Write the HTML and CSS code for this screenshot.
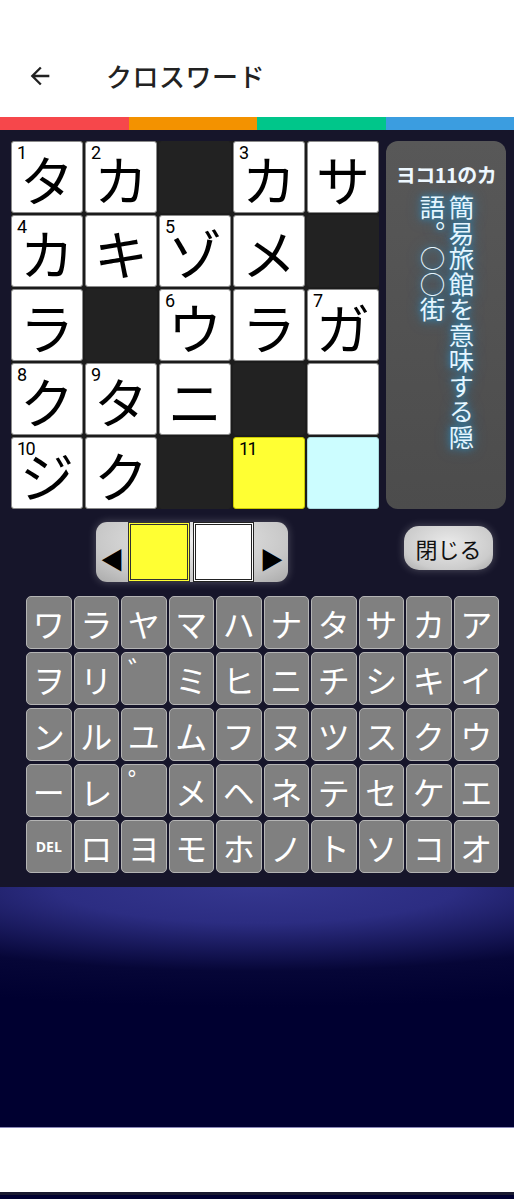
FILE: index.html
```html
<!DOCTYPE html>
<html lang="ja">
<head>
<meta charset="utf-8">
<title>クロスワード</title>
<link rel="stylesheet" href="styles.css">
</head>
<body>
<div class="app">
  <header class="topbar">
    <svg class="back" width="28" height="28" viewBox="0 0 24 24"><path d="M20 11H7.83l5.59-5.59L12 4l-8 8 8 8 1.41-1.41L7.83 13H20v-2z" fill="#222"/></svg>
    <h1 class="title">クロスワード</h1>
  </header>
  <div class="colorbar"><span class="c1"></span><span class="c2"></span><span class="c3"></span><span class="c4"></span></div>
  <main class="game">
    <div class="board-row">
      <div class="grid">
        <div class="cell"><i>1</i>タ</div>
        <div class="cell"><i>2</i>カ</div>
        <div class="cell black"></div>
        <div class="cell"><i>3</i>カ</div>
        <div class="cell">サ</div>

        <div class="cell"><i>4</i>カ</div>
        <div class="cell">キ</div>
        <div class="cell"><i>5</i>ゾ</div>
        <div class="cell">メ</div>
        <div class="cell black"></div>

        <div class="cell">ラ</div>
        <div class="cell black"></div>
        <div class="cell"><i>6</i>ウ</div>
        <div class="cell">ラ</div>
        <div class="cell"><i>7</i>ガ</div>

        <div class="cell"><i>8</i>ク</div>
        <div class="cell"><i>9</i>タ</div>
        <div class="cell">ニ</div>
        <div class="cell black"></div>
        <div class="cell"></div>

        <div class="cell"><i>10</i>ジ</div>
        <div class="cell">ク</div>
        <div class="cell black"></div>
        <div class="cell yellow"><i>11</i></div>
        <div class="cell cyan"></div>
      </div>
      <aside class="clue">
        <div class="clue-title">ヨコ11のカ</div>
        <div class="clue-text">簡易旅館を意味する隠語。○○街</div>
      </aside>
    </div>
    <div class="controls">
      <div class="answer">
        <span class="arrow">◀</span>
        <span class="slot filled"></span>
        <span class="slot"></span>
        <span class="arrow">▶</span>
      </div>
      <button class="close">閉じる</button>
    </div>
    <div class="keyboard">
      <div class="key">ワ</div><div class="key">ラ</div><div class="key">ヤ</div><div class="key">マ</div><div class="key">ハ</div><div class="key">ナ</div><div class="key">タ</div><div class="key">サ</div><div class="key">カ</div><div class="key">ア</div>
      <div class="key">ヲ</div><div class="key">リ</div><div class="key mark">゛</div><div class="key">ミ</div><div class="key">ヒ</div><div class="key">ニ</div><div class="key">チ</div><div class="key">シ</div><div class="key">キ</div><div class="key">イ</div>
      <div class="key">ン</div><div class="key">ル</div><div class="key">ユ</div><div class="key">ム</div><div class="key">フ</div><div class="key">ヌ</div><div class="key">ツ</div><div class="key">ス</div><div class="key">ク</div><div class="key">ウ</div>
      <div class="key">ー</div><div class="key">レ</div><div class="key mark">゜</div><div class="key">メ</div><div class="key">ヘ</div><div class="key">ネ</div><div class="key">テ</div><div class="key">セ</div><div class="key">ケ</div><div class="key">エ</div>
      <div class="key del">DEL</div><div class="key">ロ</div><div class="key">ヨ</div><div class="key">モ</div><div class="key">ホ</div><div class="key">ノ</div><div class="key">ト</div><div class="key">ソ</div><div class="key">コ</div><div class="key">オ</div>
    </div>
  </main>
  <div class="glow"></div>
  <div class="footer"></div>
</div>
</body>
</html>
```
FILE: styles.css
```css
* { box-sizing: border-box; }
html, body { margin: 0; padding: 0; }
body {
  background: #fff;
  font-family: "Noto Sans CJK JP", "Noto Sans", sans-serif;
}
.app { width: 514px; height: 1199px; display: flex; flex-direction: column; background: #000030; }

.topbar {
  height: 117px;
  background: #fff;
  display: flex;
  align-items: center;
  padding: 34px 0 0 26px;
}
.back { display: block; }
.title {
  margin: 0 0 0 52px;
  font-size: 26px;
  font-weight: 500;
  color: #222;
  letter-spacing: 0.5px;
}

.colorbar { height: 13px; display: flex; }
.colorbar span { flex: 1; }
.c1 { background: #f6474b; }
.c2 { background: #f39200; }
.c3 { background: #00c68a; }
.c4 { background: #3b9de0; }

.game {
  background: #16152a;
  padding: 11px 0 14px 0;
  height: 757px;
}
.board-row { display: flex; gap: 7px; padding-left: 11px; }
.grid {
  display: grid;
  grid-template-columns: repeat(5, 72px);
  grid-template-rows: repeat(5, 72px);
  gap: 2px;
  background: #1c1c1c;
}
.cell {
  position: relative;
  background: #fff;
  border: 1px solid #8a8a8a;
  border-radius: 3px;
  display: flex;
  align-items: center;
  justify-content: center;
  font-size: 54px;
  line-height: 1;
  color: #000;
  padding-top: 4px;
}
.cell i {
  position: absolute;
  left: 5px;
  top: 2px;
  font-style: normal;
  font-family: "Roboto", sans-serif;
  font-weight: 400;
  font-size: 18px;
  letter-spacing: -1.5px;
  line-height: 1;
}
.cell.black { background: #222; border-color: #222; }
.cell.yellow { background: #ffff33; border-color: #c9c900; }
.cell.cyan { background: #ccfdff; border-color: #a8d8db; }

.clue {
  width: 120px;
  height: 368px;
  background: linear-gradient(#585858, #4c4c4c);
  border-radius: 12px;
  display: flex;
  flex-direction: column;
  align-items: center;
  padding-top: 24px;
  color: #eef8ff;
}
.clue-title {
  font-size: 20px;
  font-weight: 700;
  line-height: 1;
  white-space: nowrap;
  letter-spacing: -0.5px;
}
.clue-text {
  margin-top: 10px;
  writing-mode: vertical-rl;
  font-size: 25.5px;
  line-height: 29px;
  height: 262px;
  color: #e6f6ff;
  text-shadow: 0 0 6px #2b8fc0, 0 0 14px #2b7fb0;
  margin-left: 2px;
}

.controls {
  display: flex;
  align-items: center;
  justify-content: space-between;
  padding: 13px 21px 0 96px;
  height: 73px;
}
.answer {
  width: 192px;
  height: 60px;
  border-radius: 11px;
  background: radial-gradient(ellipse at 50% 30%, #eeeeee 0%, #c8c8c8 70%, #aaaaaa 100%);
  box-shadow: 0 0 8px rgba(255,255,255,0.25);
  display: flex;
  align-items: center;
}
.arrow {
  width: 33px;
  text-align: center;
  font-size: 24px;
  color: #000;
  line-height: 1;
  padding-top: 14px;
}
.slot {
  width: 62px;
  height: 60px;
  background: #fff;
  border: 3px double #222;
  margin-right: 2px;
}
.slot.filled { background: #ffff33; border-color: #333; margin-right: 3px; }
.close {
  width: 89px;
  height: 44px;
  border: none;
  border-radius: 15px;
  background: radial-gradient(ellipse at 50% 40%, #eaeaea 0%, #cccccc 70%, #a8a8a8 100%);
  box-shadow: 0 0 8px rgba(255,255,255,0.25);
  font-family: "Noto Sans CJK JP", sans-serif;
  font-size: 22px;
  color: #111;
  padding: 0;
  margin-top: -8px;
}

.keyboard {
  margin: 14px 0 0 26px;
  display: grid;
  grid-template-columns: repeat(10, 45.5px);
  grid-auto-rows: 53px;
  column-gap: 2px;
  row-gap: 3px;
}
.key {
  background: #808080;
  border: 1.5px solid #b4b4b4;
  border-radius: 5px;
  color: #fff;
  font-size: 32px;
  line-height: 1;
  display: flex;
  align-items: center;
  justify-content: center;
}
.key.mark { align-items: flex-start; justify-content: flex-start; font-size: 28px; padding: 3px 0 0 6px; }
.key.del { font-family: "Open Sans", "DejaVu Sans", sans-serif; font-size: 14px; font-weight: 700; }

.glow {
  height: 241px;
  background:
    radial-gradient(ellipse 130% 50% at 50% 0%, #35378f 0%, #2c2d82 30%, rgba(10,10,60,0.6) 70%, rgba(0,0,48,0) 100%),
    #000030;
  border-bottom: 1px solid #8a88b8;
}
.footer {
  height: 67px;
  background: #fff;
  border-bottom: 3px solid #1a1a30;
}
```
